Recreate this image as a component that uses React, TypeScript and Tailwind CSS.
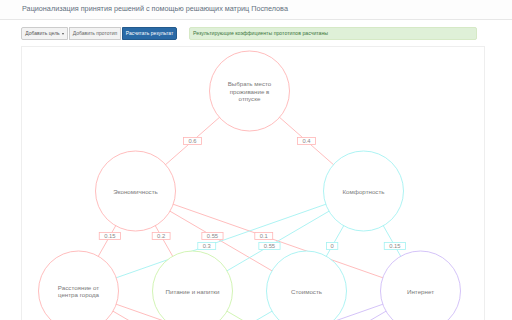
import type { ReactNode } from "react"

type GraphNode = {
  id: string
  x: number
  y: number
  color: string
  lines: string[]
}

type Edge = {
  from: string
  to: string
  color: string
  label?: string
  labelY?: number
}

const PINK = "#ffb6b6"
const CYAN = "#a4f2f2"
const GREEN = "#cdf3ad"
const PURPLE = "#cfbcf7"
const GRAY = "#d8d8d8"

const nodes: GraphNode[] = [
  { id: "goal", x: 249.5, y: 91, color: PINK, lines: ["Выбрать место", "проживание в", "отпуске"] },
  { id: "econ", x: 135.5, y: 191, color: PINK, lines: ["Экономичность"] },
  { id: "comf", x: 363.5, y: 191, color: CYAN, lines: ["Комфортность"] },
  { id: "dist", x: 78.5, y: 291, color: PINK, lines: ["Расстояние от", "центра города"] },
  { id: "food", x: 192.5, y: 291, color: GREEN, lines: ["Питание и напитки"] },
  { id: "cost", x: 306.5, y: 291, color: CYAN, lines: ["Стоимость"] },
  { id: "net", x: 420.5, y: 291, color: PURPLE, lines: ["Интернет"] },
  // прототипы, ниже видимой области
  { id: "p1", x: 135.5, y: 391, color: GRAY, lines: [] },
  { id: "p2", x: 249.5, y: 391, color: GRAY, lines: [] },
  { id: "p3", x: 363.5, y: 391, color: GRAY, lines: [] },
]

const edges: Edge[] = [
  { from: "goal", to: "econ", color: PINK, label: "0.6", labelY: 141 },
  { from: "goal", to: "comf", color: PINK, label: "0.4", labelY: 141 },
  { from: "econ", to: "dist", color: PINK, label: "0.15", labelY: 236 },
  { from: "econ", to: "food", color: PINK, label: "0.2", labelY: 236 },
  { from: "econ", to: "cost", color: PINK, label: "0.55", labelY: 236 },
  { from: "econ", to: "net", color: PINK, label: "0.1", labelY: 236 },
  { from: "comf", to: "dist", color: CYAN, label: "0.3", labelY: 246 },
  { from: "comf", to: "food", color: CYAN, label: "0.55", labelY: 246 },
  { from: "comf", to: "cost", color: CYAN, label: "0", labelY: 246 },
  { from: "comf", to: "net", color: CYAN, label: "0.15", labelY: 246 },
  ...["dist", "food", "cost", "net"].flatMap(c =>
    ["p1", "p2", "p3"].map(p => ({
      from: c,
      to: p,
      color: nodes.find(n => n.id == c)!.color,
    }))
  ),
]

function byId(id: string) {
  return nodes.find(n => n.id == id)!
}

function Graph() {
  const labels: ReactNode[] = []

  const lines = edges.map((e, idx) => {
    const a = byId(e.from)
    const b = byId(e.to)
    if (e.label && e.labelY) {
      const t = (e.labelY - a.y) / (b.y - a.y)
      const lx = a.x + (b.x - a.x) * t
      const w = 8 + e.label.length * 3.3
      labels.push(
        <g key={"l" + idx}>
          <rect x={lx - w / 2} y={e.labelY - 3.5} width={w} height={7} fill="white" stroke={e.color} strokeWidth={0.8} />
          <text x={lx} y={e.labelY + 0.3} fontSize={5.8} fill="#888" textAnchor="middle" dominantBaseline="central">
            {e.label}
          </text>
        </g>
      )
    }
    return <line key={idx} x1={a.x} y1={a.y} x2={b.x} y2={b.y} stroke={e.color} strokeWidth={0.9} />
  })

  return (
    <svg width={455} height={470} viewBox="22 47 455 470" className="block" style={{ fontFamily: '"Liberation Sans", Arial, sans-serif' }}>
      {lines}
      {nodes.map(n => (
        <g key={n.id}>
          <circle cx={n.x} cy={n.y} r={40} fill="white" stroke={n.color} strokeWidth={0.9} />
          {n.lines.map((ln, i) => (
            <text
              key={i}
              x={n.x}
              y={n.y + (i - (n.lines.length - 1) / 2) * 7.7}
              fontSize={6.2}
              fill="#7a7a7a"
              textAnchor="middle"
              dominantBaseline="central"
            >
              {ln}
            </text>
          ))}
        </g>
      ))}
      {labels}
    </svg>
  )
}

export default function App() {
  return (
    <div className="w-[512px] h-[320px] overflow-hidden bg-white font-['Liberation_Sans',Arial,sans-serif]">
      <div className="h-[20px] border-b border-[#e7e7e7] bg-[#fdfdfd] px-[22px] pt-[5px]">
        <div className="text-[7.25px] text-[#637080] leading-[8px]">
          Рационализация принятия решений с помощью решающих матриц Поспелова
        </div>
      </div>

      <div className="px-[21px] pt-[7px]">
        <div className="flex items-center h-[13px]">
          <div className="flex gap-px">
            <button className="w-[47px] h-[13px] rounded-l-[2px] border border-[#ccc] bg-[#f3f3f3] text-[5px] text-[#555] flex items-center justify-center gap-[2px]">
              Добавить цель
              <span className="border-x-[1.5px] border-t-[2px] border-x-transparent border-t-[#555]" />
            </button>
            <button className="w-[52px] h-[13px] border border-[#ccc] bg-[#f3f3f3] text-[5px] text-[#666]">
              Добавить прототип
            </button>
            <button className="w-[55px] h-[13px] rounded-r-[2px] border border-[#245a8c] bg-[#2a6aa6] text-[5px] text-white">
              Расчитать результат
            </button>
          </div>
          <div className="ml-[12px] w-[288px] h-[13px] bg-[#dff0d8] border border-[#d6e9c6] rounded-[2px] flex items-center px-[3px] text-[5.2px] text-[#3c763d]">
            Результирующие коэффициенты прототипов расчитаны
          </div>
        </div>

        <div className="mt-[6px] w-[464px] h-[300px] border border-[#eee] overflow-y-scroll overflow-x-hidden [&::-webkit-scrollbar]:w-[8px] [&::-webkit-scrollbar-track]:bg-[#f1f1f1] [&::-webkit-scrollbar-thumb]:bg-[#f1f1f1]">
          <Graph />
        </div>
      </div>
    </div>
  )
}
